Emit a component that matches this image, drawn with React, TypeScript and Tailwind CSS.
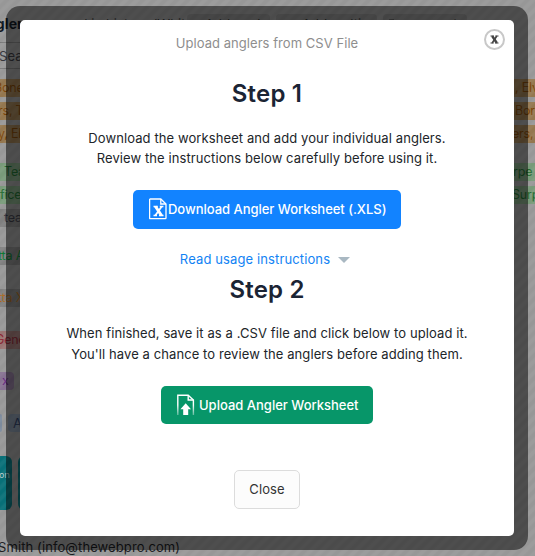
interface Row {
  left: string
  right?: string
  cls: string
  leftCls: string
  rightCls?: string
}

const ROWS: Row[] = [
  { left: 'Bone', right: ', Elvis', cls: 'mt-[10px] bg-[#94774f] text-[#7a4408]', leftCls: '-ml-[6px]', rightCls: 'w-[20px]' },
  { left: 'rs, Tom', right: 'Boris', cls: 'mt-[5px] bg-[#94774f] text-[#7a4408]', leftCls: '-ml-[2px]', rightCls: 'w-[20px]' },
  { left: 'y, Elvis', right: 'ers, T', cls: 'mt-[5px] bg-[#94774f] text-[#7a4408]', leftCls: '-ml-[2px]', rightCls: 'w-[23px]' },
  { left: 'Team', right: 'rpe l', cls: 'mt-[20px] bg-[#789a79] text-[#1f6a30]', leftCls: 'ml-[4px]', rightCls: 'w-[22px]' },
  { left: 'fice', right: 'Surpe', cls: 'mt-[5px] bg-[#789a79] text-[#1f6a30]', leftCls: 'ml-0', rightCls: 'w-[23px]' },
  { left: 'team', cls: 'mt-[5px] w-[300px] bg-[#7f7f7f] text-[#3a3a44]', leftCls: 'ml-[4px]' },
  { left: 'tta A', cls: 'mt-[20px] w-[300px] bg-[#7f7f7f] text-[#0e7a32]', leftCls: '-ml-[2px]' },
  { left: 'tta X', cls: 'mt-[24px] w-[300px] bg-[#7f7f7f] text-[#a86a24]', leftCls: '-ml-[2px]' },
  { left: 'Gene', cls: 'mt-[24px] w-[300px] bg-[#9a7573] text-[#8a2432]', leftCls: '-ml-[5px]' },
  { left: 'x', cls: 'mt-[23px] w-[14px] rounded-r bg-[#877292] text-[#62247c]', leftCls: 'ml-[2px]' },
]

function PageBehind() {
  return (
    <div className="flex h-[556px] w-full flex-col overflow-hidden whitespace-nowrap text-[13px] leading-[18px] tracking-[0.1px]">
      <div className="flex h-[42px] shrink-0 items-start pt-[14px]">
        <span className="-ml-[13px] w-[70px] text-[14px] font-bold leading-[20px] text-[#0c131d]">nglers</span>
        <span className="w-[130px] leading-[20px] text-[#333]">used in history (White)</span>
        <span className="h-[22px] w-[83px] rounded bg-[#878787] pl-[18px] leading-[20px] text-[#333]">Add angler</span>
        <span className="ml-[6px] h-[22px] w-[101px] rounded bg-[#878787] pl-[26px] leading-[20px] text-[#333]">Add multi</span>
        <span className="ml-[6px] flex h-[22px] w-[84px] items-center gap-[4px] rounded bg-[#878787] pl-[5px] text-[#333]">
          <svg className="shrink-0" width="10" height="13" viewBox="0 0 10 13" fill="none" stroke="currentColor">
            <path d="M1 1h5l3 3v8H1zM6 1v3h3" />
          </svg>
          Upload list
        </span>
      </div>
      <div className="-ml-px h-[27px] w-[300px] shrink-0 border-y border-[#777] pt-[4px] text-[#35353b]">Search</div>
      {ROWS.map((row, i) => (
        <div key={i} className={`flex h-[18px] shrink-0 justify-between overflow-hidden text-[12.5px] tracking-[-0.2px] ${row.cls}`}>
          <span className={row.leftCls}>{row.left}</span>
          {row.right && <span className={row.rightCls}>{row.right}</span>}
        </div>
      ))}
      <div className="mt-[24px] flex h-[18px] shrink-0 text-[#2d3d62]">
        <span className="w-[2px] rounded-r bg-[#7c8a9c]" />
        <span className="ml-[6px] w-[60px] rounded bg-[#7c8a9c] pl-[5px]">Anglers</span>
      </div>
      <div className="mt-[24px] flex h-[54px] shrink-0 text-[9px] text-[#b8c8c8]">
        <span className="w-[12px] rounded-r-md bg-[#087078] pt-[10px]">
          <span className="-ml-px">on</span>
        </span>
        <span className="ml-[6px] w-[60px] rounded-md bg-[#087078]" />
      </div>
      <div className="mt-[28px] -ml-[2px] text-[#16171b]">Smith (info@thewebpro.com)</div>
    </div>
  )
}

function XlsIcon() {
  return (
    <svg className="-mt-[2px] shrink-0" width="19" height="22" viewBox="0 0 19 22" fill="none" stroke="white">
      <path d="M1.3 1h10.5l5.2 5v14a.7.7 0 0 1-.7.7H1.3a.7.7 0 0 1-.7-.7V1.7a.7.7 0 0 1 .7-.7Z" strokeWidth="1.3" />
      <path d="M11.8 1v5H17" strokeWidth="1.3" />
      <path d="m6.5 8.5 6 9" strokeWidth="3" />
      <path d="m12.7 8.5-6.4 9" strokeWidth="1.8" />
      <path d="M4.5 8.5h4.3M10.8 8.5h3.6M4.5 17.5H8M10 17.5h4.5" strokeWidth="1.5" />
    </svg>
  )
}

function UploadIcon() {
  return (
    <svg className="-mt-px shrink-0" width="18" height="22" viewBox="0 0 18 22" fill="none">
      <defs>
        <linearGradient id="fade" x1="0" y1="0" x2="0" y2="22" gradientUnits="userSpaceOnUse">
          <stop offset="0.5" stopColor="white" />
          <stop offset="1" stopColor="white" stopOpacity="0.3" />
        </linearGradient>
      </defs>
      <path d="M.8 21V1.2h10.4L16.4 6v15" stroke="url(#fade)" strokeWidth="1.4" />
      <path d="M11.2 1.2V6h5.2" stroke="white" strokeWidth="1.4" />
      <path d="M8.7 9.3 14 15.2h-2.8V21H6.2v-5.8H3.4Z" fill="white" />
    </svg>
  )
}

function UploadModal() {
  return (
    <div className="absolute left-[6px] top-[6px] h-[544px] w-[522px] rounded-[14px] bg-black/50 p-[14px]">
      <div className="relative flex h-[516px] w-[494px] flex-col items-center rounded-[5px] bg-white text-[13px] leading-[20px] tracking-[0.09px] text-[#212529]">
        <button className="absolute right-[9px] top-[9px] flex h-[21px] w-[21px] items-center justify-center rounded-full border-2 border-[#c8c8c8] bg-white">
          <svg width="9" height="9" viewBox="0 0 9 9" fill="none" stroke="#444">
            <path d="M2.2 1l4.6 7" strokeWidth="2.4" />
            <path d="M6.8 1 2.2 8" strokeWidth="1.6" />
            <path d="M.5 1h3.2M5.3 1h3.2M.5 8h3.2M5.3 8h3.2" strokeWidth="1.2" />
          </svg>
        </button>

        <div className="mt-[13px] tracking-[0.05px] text-[#8e8e8e]">Upload anglers from CSV File</div>

        <h2 className="mt-[26px] text-[24px] font-semibold leading-[30px] tracking-[0.2px] text-[#1b2434]">Step 1</h2>
        <p className="mt-[19px] text-center">
          Download the worksheet and add your individual anglers.
          <br />
          Review the instructions below carefully before using it.
        </p>
        <button className="mt-[22px] flex h-[39px] w-[268px] items-center rounded-[5px] bg-[#1283ff] pl-[16px] font-medium tracking-[-0.03px] text-white">
          <XlsIcon />
          <span className="-mt-px">Download Angler Worksheet (.XLS)</span>
        </button>

        <div className="mr-[4px] mt-[20px] flex items-center gap-[8px] tracking-[0.12px] text-[#1283f4]">
          Read usage instructions
          <svg className="mt-[2px]" width="12" height="6" viewBox="0 0 12 6" fill="#a9b8c2">
            <path d="M0 0h12L6 6Z" />
          </svg>
        </div>

        <h2 className="mt-[6px] text-[24px] font-semibold leading-[30px] tracking-[0.2px] text-[#1b2434]">Step 2</h2>
        <p className="mt-[18px] text-center leading-[21px]">
          When finished, save it as a .CSV file and click below to upload it.
          <br />
          You'll have a chance to review the anglers before adding them.
        </p>
        <button className="mt-[21px] flex h-[38px] w-[212px] items-center gap-[4px] rounded-[5px] bg-[#079669] pl-[16px] font-medium tracking-normal text-white">
          <UploadIcon />
          Upload Angler Worksheet
        </button>

        <button className="mt-[46px] h-[39px] w-[66px] rounded-[5px] border border-[#dcdcdc] bg-[#fcfcfc] pb-px text-[#333]">
          Close
        </button>
      </div>
    </div>
  )
}

export default function App() {
  return (
    <div className="relative h-[556px] w-[535px] overflow-hidden bg-[#979797] font-['Inter',sans-serif]">
      <PageBehind />
      <div className="absolute inset-0 bg-[repeating-linear-gradient(135deg,rgba(255,255,255,0.05)_0px,rgba(255,255,255,0.05)_2px,transparent_4px,transparent_6px,rgba(255,255,255,0.05)_8px)]" />
      <UploadModal />
    </div>
  )
}
